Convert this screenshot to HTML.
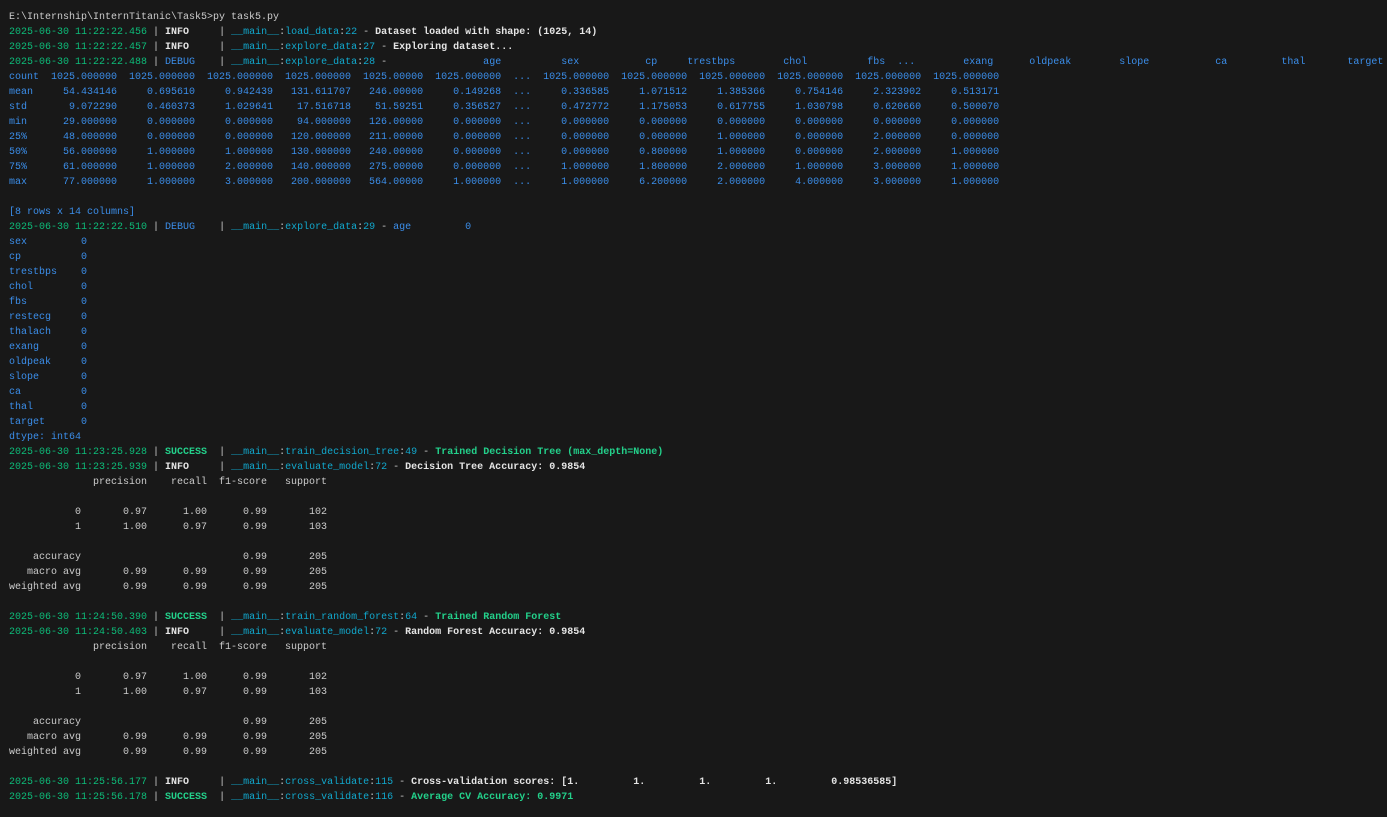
<!DOCTYPE html>
<html><head><meta charset="utf-8"><style>
html,body{margin:0;padding:0;background:#181818;width:1387px;height:817px;overflow:hidden}
pre{margin:0;padding:10px 0 0 9px;font-family:"Liberation Mono",monospace;font-size:10px;line-height:15px;color:#cccccc;white-space:pre}
.t{color:#0dbc79}.c{color:#11a8cd}.b{color:#3b8eea;font-weight:bold}.d{color:#3b8eea}.w{color:#e5e5e5;font-weight:bold}.g{color:#23d18b;font-weight:bold}
</style></head><body><pre>E:\Internship\InternTitanic\Task5&gt;py task5.py
<span class="t">2025-06-30 11:22:22.456</span> | <span class="w">INFO    </span> | <span class="c">__main__</span>:<span class="c">load_data</span>:<span class="c">22</span> - <span class="w">Dataset loaded with shape: (1025, 14)</span>
<span class="t">2025-06-30 11:22:22.457</span> | <span class="w">INFO    </span> | <span class="c">__main__</span>:<span class="c">explore_data</span>:<span class="c">27</span> - <span class="w">Exploring dataset...</span>
<span class="t">2025-06-30 11:22:22.488</span> | <span class="d">DEBUG   </span> | <span class="c">__main__</span>:<span class="c">explore_data</span>:<span class="c">28</span> - <span class="d">               age          sex           cp     trestbps        chol          fbs  ...        exang      oldpeak        slope           ca         thal       target
count  1025.000000  1025.000000  1025.000000  1025.000000  1025.00000  1025.000000  ...  1025.000000  1025.000000  1025.000000  1025.000000  1025.000000  1025.000000
mean     54.434146     0.695610     0.942439   131.611707   246.00000     0.149268  ...     0.336585     1.071512     1.385366     0.754146     2.323902     0.513171
std       9.072290     0.460373     1.029641    17.516718    51.59251     0.356527  ...     0.472772     1.175053     0.617755     1.030798     0.620660     0.500070
min      29.000000     0.000000     0.000000    94.000000   126.00000     0.000000  ...     0.000000     0.000000     0.000000     0.000000     0.000000     0.000000
25%      48.000000     0.000000     0.000000   120.000000   211.00000     0.000000  ...     0.000000     0.000000     1.000000     0.000000     2.000000     0.000000
50%      56.000000     1.000000     1.000000   130.000000   240.00000     0.000000  ...     0.000000     0.800000     1.000000     0.000000     2.000000     1.000000
75%      61.000000     1.000000     2.000000   140.000000   275.00000     0.000000  ...     1.000000     1.800000     2.000000     1.000000     3.000000     1.000000
max      77.000000     1.000000     3.000000   200.000000   564.00000     1.000000  ...     1.000000     6.200000     2.000000     4.000000     3.000000     1.000000

[8 rows x 14 columns]</span>
<span class="t">2025-06-30 11:22:22.510</span> | <span class="d">DEBUG   </span> | <span class="c">__main__</span>:<span class="c">explore_data</span>:<span class="c">29</span> - <span class="d">age         0
sex         0
cp          0
trestbps    0
chol        0
fbs         0
restecg     0
thalach     0
exang       0
oldpeak     0
slope       0
ca          0
thal        0
target      0
dtype: int64</span>
<span class="t">2025-06-30 11:23:25.928</span> | <span class="g">SUCCESS </span> | <span class="c">__main__</span>:<span class="c">train_decision_tree</span>:<span class="c">49</span> - <span class="g">Trained Decision Tree (max_depth=None)</span>
<span class="t">2025-06-30 11:23:25.939</span> | <span class="w">INFO    </span> | <span class="c">__main__</span>:<span class="c">evaluate_model</span>:<span class="c">72</span> - <span class="w">Decision Tree Accuracy: 0.9854</span>
              precision    recall  f1-score   support

           0       0.97      1.00      0.99       102
           1       1.00      0.97      0.99       103

    accuracy                           0.99       205
   macro avg       0.99      0.99      0.99       205
weighted avg       0.99      0.99      0.99       205

<span class="t">2025-06-30 11:24:50.390</span> | <span class="g">SUCCESS </span> | <span class="c">__main__</span>:<span class="c">train_random_forest</span>:<span class="c">64</span> - <span class="g">Trained Random Forest</span>
<span class="t">2025-06-30 11:24:50.403</span> | <span class="w">INFO    </span> | <span class="c">__main__</span>:<span class="c">evaluate_model</span>:<span class="c">72</span> - <span class="w">Random Forest Accuracy: 0.9854</span>
              precision    recall  f1-score   support

           0       0.97      1.00      0.99       102
           1       1.00      0.97      0.99       103

    accuracy                           0.99       205
   macro avg       0.99      0.99      0.99       205
weighted avg       0.99      0.99      0.99       205

<span class="t">2025-06-30 11:25:56.177</span> | <span class="w">INFO    </span> | <span class="c">__main__</span>:<span class="c">cross_validate</span>:<span class="c">115</span> - <span class="w">Cross-validation scores: [1.         1.         1.         1.         0.98536585]</span>
<span class="t">2025-06-30 11:25:56.178</span> | <span class="g">SUCCESS </span> | <span class="c">__main__</span>:<span class="c">cross_validate</span>:<span class="c">116</span> - <span class="g">Average CV Accuracy: 0.9971</span>
</pre></body></html>
